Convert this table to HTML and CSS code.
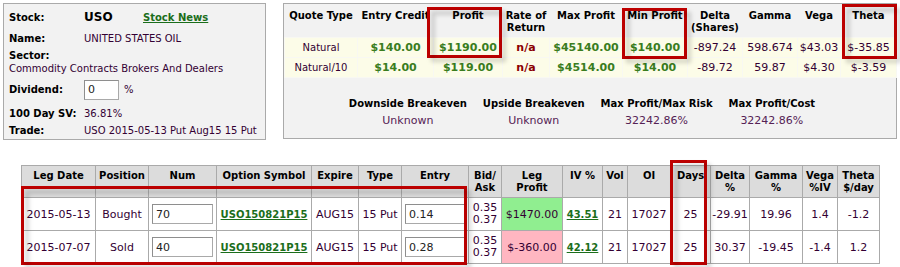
FILE: index.html
```html
<!DOCTYPE html>
<html>
<head>
<meta charset="utf-8">
<link rel="stylesheet" href="styles.css">
</head>
<body>
<div class="page">
  <div class="top">
    <div class="info">
      <div class="row r-stock"><span class="lbl">Stock:</span><span class="sym">USO</span><a class="news" href="#">Stock News</a></div>
      <div class="row r-name"><span class="lbl">Name:</span><span>UNITED STATES OIL</span></div>
      <div class="sector"><div class="lbl">Sector:</div><div>Commodity Contracts Brokers And Dealers</div></div>
      <div class="row r-div"><span class="lbl">Dividend:</span><input class="inp div-inp" type="text" value="0"><span class="pct">%</span></div>
      <div class="row r-sv"><span class="lbl">100 Day SV:</span><span>36.81%</span></div>
      <div class="row r-trade"><span class="lbl">Trade:</span><span>USO 2015-05-13 Put Aug15 15 Put</span></div>
    </div>
    <div class="quote">
      <table class="qt">
        <colgroup>
          <col style="width:73px"><col style="width:76px"><col style="width:69px"><col style="width:47px"><col style="width:73px"><col style="width:65px"><col style="width:55px"><col style="width:55px"><col style="width:43px"><col style="width:56px">
        </colgroup>
        <thead>
          <tr><th>Quote Type</th><th>Entry Credit</th><th>Profit</th><th>Rate of Return</th><th>Max Profit</th><th>Min Profit</th><th>Delta (Shares)</th><th>Gamma</th><th>Vega</th><th>Theta</th></tr>
        </thead>
        <tbody>
          <tr><td class="qtype">Natural</td><td class="money">$140.00</td><td class="money">$1190.00</td><td class="na">n/a</td><td class="money">$45140.00</td><td class="money">$140.00</td><td>-897.24</td><td>598.674</td><td>$43.03</td><td>$-35.85</td></tr>
          <tr><td class="qtype">Natural/10</td><td class="money">$14.00</td><td class="money">$119.00</td><td class="na">n/a</td><td class="money">$4514.00</td><td class="money">$14.00</td><td>-89.72</td><td>59.87</td><td>$4.30</td><td>$-3.59</td></tr>
        </tbody>
      </table>
      <div class="be">
        <div class="be-item"><div class="be-lbl">Downside Breakeven</div><div class="be-val">Unknown</div></div>
        <div class="be-item"><div class="be-lbl">Upside Breakeven</div><div class="be-val">Unknown</div></div>
        <div class="be-item"><div class="be-lbl">Max Profit/Max Risk</div><div class="be-val">32242.86%</div></div>
        <div class="be-item"><div class="be-lbl">Max Profit/Cost</div><div class="be-val">32242.86%</div></div>
      </div>
    </div>
  </div>

  <table class="legs">
    <colgroup>
      <col style="width:74px"><col style="width:53px"><col style="width:68px"><col style="width:95px"><col style="width:47px"><col style="width:43px"><col style="width:67px"><col style="width:33px"><col style="width:61px"><col style="width:40px"><col style="width:25px"><col style="width:43px"><col style="width:40px"><col style="width:39px"><col style="width:53px"><col style="width:35px"><col style="width:42px">
    </colgroup>
    <thead>
      <tr><th>Leg Date</th><th>Position</th><th>Num</th><th>Option Symbol</th><th>Expire</th><th>Type</th><th>Entry</th><th>Bid/<br>Ask</th><th>Leg<br>Profit</th><th>IV %</th><th>Vol</th><th>OI</th><th>Days</th><th>Delta<br>%</th><th>Gamma<br>%</th><th>Vega<br>%IV</th><th>Theta<br>$/day</th></tr>
    </thead>
    <tbody>
      <tr>
        <td>2015-05-13</td><td>Bought</td><td class="icell"><input class="inp leg-inp" type="text" value="70"></td><td><a class="lnk" href="#">USO150821P15</a></td><td>AUG15</td><td>15 Put</td><td class="icell"><input class="inp leg-inp" type="text" value="0.14"></td><td class="ba">0.35<br>0.37</td><td class="gain">$1470.00</td><td><a class="lnk" href="#">43.51</a></td><td>21</td><td>17027</td><td>25</td><td>-29.91</td><td>19.96</td><td>1.4</td><td>-1.2</td>
      </tr>
      <tr>
        <td>2015-07-07</td><td>Sold</td><td class="icell"><input class="inp leg-inp" type="text" value="40"></td><td><a class="lnk" href="#">USO150821P15</a></td><td>AUG15</td><td>15 Put</td><td class="icell"><input class="inp leg-inp" type="text" value="0.28"></td><td class="ba">0.35<br>0.37</td><td class="loss">$-360.00</td><td><a class="lnk" href="#">42.12</a></td><td>21</td><td>17027</td><td>25</td><td>30.37</td><td>-19.45</td><td>-1.4</td><td>1.2</td>
      </tr>
    </tbody>
  </table>

  <div class="mark m-profit"></div>
  <div class="mark m-minprofit"></div>
  <div class="mark m-theta"></div>
  <div class="mark m-legs"></div>
  <div class="mark m-days"></div>
</div>
</body>
</html>
```
FILE: styles.css
```css
html, body {
  margin: 0;
  padding: 0;
  background: #ffffff;
}
body {
  font-family: "DejaVu Sans", Verdana, sans-serif;
  color: #330033;
  width: 900px;
  height: 267px;
  overflow: hidden;
}
.page {
  position: relative;
  padding: 3px 0 0 3px;
}
.top {
  display: flex;
  align-items: flex-start;
  gap: 17px;
}

/* ---------- left info panel ---------- */
.info {
  width: 263px;
  height: 137px;
  box-sizing: border-box;
  border: 1px solid #aaaaaa;
  background: #f2f2f2;
  padding: 4px 5px 0 5px;
  font-size: 10px;
  line-height: 13px;
}
.row {
  display: flex;
  align-items: center;
  height: 18px;
  white-space: nowrap;
}
.lbl {
  width: 75px;
  flex: none;
  font-weight: bold;
  color: #000;
}
.sym {
  width: 59px;
  flex: none;
  font-size: 12px;
  font-weight: bold;
  color: #000;
}
.news {
  color: #1b6e1b;
  font-weight: bold;
  text-decoration: underline;
}
.r-name { margin-top: 3px; }
.sector { margin-top: 2px; white-space: nowrap; }
.r-div { margin-top: 4px; height: 21px; }
.r-sv { margin-top: 5px; height: 17px; }
.r-trade { height: 17px; }
.inp {
  box-sizing: border-box;
  font-family: "DejaVu Sans", Verdana, sans-serif;
  font-size: 11px;
  color: #222;
  background: #fff;
  border: 1px solid #a9a9a9;
  border-top-color: #8e8e8e;
  border-left-color: #8e8e8e;
  padding: 0 3px;
  margin: 0;
  outline: none;
}
.div-inp {
  width: 35px;
  height: 20px;
}
.pct { margin-left: 5px; }

/* ---------- quote panel ---------- */
.quote {
  width: 614px;
  height: 136px;
  box-sizing: border-box;
  border: 1px solid #aaaaaa;
  background: #f2f2f2;
}
.qt {
  width: 612px;
  table-layout: fixed;
  border-collapse: collapse;
}
.qt th {
  height: 33px;
  box-sizing: border-box;
  vertical-align: top;
  padding: 6px 0 0 0;
  font-size: 10px;
  line-height: 12px;
  font-weight: bold;
  color: #000;
  text-align: center;
}
.qt td {
  height: 20px;
  box-sizing: border-box;
  padding: 0;
  text-align: center;
  background: #fcfce8;
  border: 1px solid #f8f8f2;
  font-size: 11px;
  color: #330033;
  white-space: nowrap;
}
.qt td.qtype { font-size: 10px; }
.qt td.money {
  font-weight: bold;
  color: #3a7d1e;
}
.qt td.na {
  font-weight: bold;
  color: #8b0000;
}
.be {
  display: flex;
  justify-content: center;
  gap: 16px;
  margin-top: 20px;
  padding-right: 16px;
}
.be-item {
  text-align: center;
  white-space: nowrap;
}
.be-lbl {
  font-size: 10px;
  line-height: 12px;
  font-weight: bold;
  color: #000;
}
.be-val {
  margin-top: 5px;
  font-size: 11px;
  line-height: 12px;
  color: #552255;
}

/* ---------- legs table ---------- */
.legs {
  margin: 25px 0 0 18px;
  width: 859px;
  table-layout: fixed;
  border-collapse: collapse;
  font-size: 11px;
}
.legs th,
.legs td {
  border: 1px solid #aaaaaa;
  padding: 0;
  text-align: center;
  white-space: nowrap;
}
.legs th {
  height: 27px;
  vertical-align: top;
  padding-top: 4px;
  background: #dcdcdc;
  font-size: 10px;
  line-height: 12px;
  font-weight: bold;
  color: #000;
}
.legs td {
  height: 32px;
  vertical-align: middle;
  background: #fff;
  color: #330033;
}
.legs td.icell {
  text-align: left;
  padding-left: 3px;
}
.leg-inp {
  width: 61px;
  height: 20px;
  vertical-align: middle;
}
.legs td.ba {
  line-height: 12px;
}
.legs td.gain { background: #90ee90; }
.legs td.loss { background: #ffb6c1; }
.lnk {
  color: #1b6e1b;
  font-size: 10px;
  font-weight: bold;
  text-decoration: underline;
}

/* ---------- red annotation boxes ---------- */
.mark {
  position: absolute;
  box-sizing: border-box;
  border: 3px solid #c00000;
  z-index: 1;
}
.mark::before {
  content: "";
  position: absolute;
  left: 1px;
  top: 1px;
  right: -7px;
  bottom: -7px;
  border: 4px solid rgba(0, 0, 0, 0.16);
  filter: blur(2px);
  z-index: -1;
}
.m-profit { left: 427px; top: 7px; width: 75px; height: 51px; }
.m-minprofit { left: 622px; top: 8px; width: 65px; height: 51px; }
.m-theta { left: 842px; top: 4px; width: 55px; height: 55px; }
.m-legs { left: 21px; top: 186px; width: 446px; height: 79px; }
.m-days { left: 670px; top: 160px; width: 37px; height: 105px; }
```
